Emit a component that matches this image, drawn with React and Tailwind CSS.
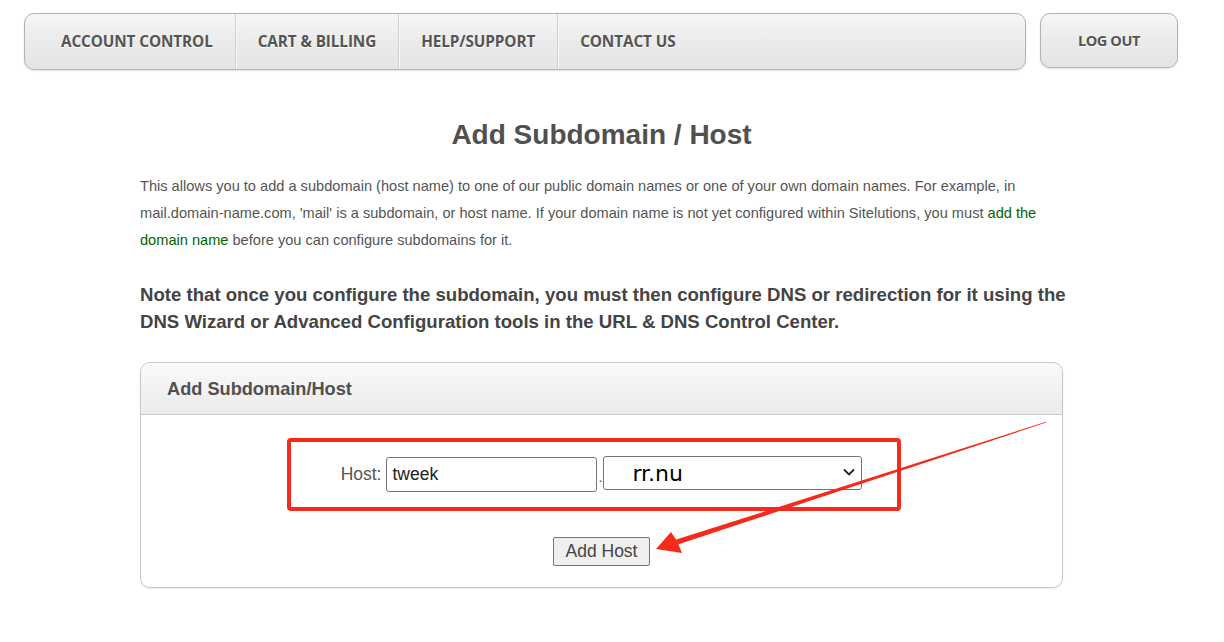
const navItems = ["ACCOUNT CONTROL", "CART & BILLING", "HELP/SUPPORT", "CONTACT US"]

const NavBar = () => (
  <div className="flex items-start gap-[14px]">
    <div className="flex h-[57px] w-[1002px] items-stretch rounded-[10px] border border-[#b3b3b3] bg-gradient-to-b from-[#f6f6f6] via-[#ebebeb] to-[#e4e4e4] pl-[14px] shadow-[0_1px_2px_rgba(0,0,0,0.12)]">
      {navItems.map((item, i) => (
        <div
          key={item}
          className={`flex items-center px-[22px] ${
            i < 3 ? "border-r border-[#d0d0d0] shadow-[1px_0_0_#f8f8f8]" : ""
          }`}
        >
          <span className="font-['Open_Sans'] text-[15.3px] font-bold tracking-[-0.1px] text-[#555] [text-shadow:0_1px_0_#fff]">
            {item}
          </span>
        </div>
      ))}
    </div>
    <div className="flex h-[55px] w-[138px] items-center justify-center rounded-[10px] border border-[#b3b3b3] bg-gradient-to-b from-[#f6f6f6] via-[#ebebeb] to-[#e4e4e4] shadow-[0_1px_2px_rgba(0,0,0,0.12)]">
      <span className="font-['Open_Sans'] text-[14.5px] font-bold tracking-[-0.4px] text-[#555] [text-shadow:0_1px_0_#fff]">
        LOG OUT
      </span>
    </div>
  </div>
)

const Arrow = () => (
  <svg
    className="pointer-events-none absolute left-0 top-0"
    width="1224"
    height="642"
    viewBox="0 0 1224 642"
  >
    <polygon
      points="1046,421.8 1046,422.6 677.8,544.6 676.2,539.6"
      fill="#f52a1a"
    />
    <polygon points="656,549 671,532 677,541 682,553" fill="#f52a1a" />
  </svg>
)

const App = () => {
  return (
    <div className="relative h-[642px] w-[1224px] overflow-hidden bg-white font-['Liberation_Sans'] text-[#555]">
      <div className="px-[24px] pt-[13px]">
        <NavBar />
      </div>

      <div className="ml-[140px] w-[923px]">
        <h1 className="mt-[49px] text-center text-[28px] font-bold leading-[32px] text-[#505050]">
          Add Subdomain / Host
        </h1>

        <p className="mt-[22px] text-[14.6px] leading-[27px] text-[#555]">
          This allows you to add a subdomain (host name) to one of our public domain names or one of your own
          domain names. For example, in mail.domain-name.com, 'mail' is a subdomain, or host name. If your
          domain name is not yet configured within Sitelutions, you must{" "}
          <a className="text-[#006600]">add the domain name</a> before you can configure subdomains for it.
        </p>

        <p className="mt-[27px] whitespace-nowrap text-[18.6px] font-bold leading-[27px] text-[#444]">
          Note that once you configure the subdomain, you must then configure DNS or redirection for it using the
          <br />
          DNS Wizard or Advanced Configuration tools in the URL &amp; DNS Control Center.
        </p>

        <div className="mt-[27px] rounded-[10px] border border-[#c8c8c8] shadow-[0_1px_2px_rgba(0,0,0,0.08)]">
          <div className="flex h-[52px] items-center rounded-t-[10px] border-b border-[#c8c8c8] bg-gradient-to-b from-[#fafafa] to-[#ebebeb] pl-[26px] pt-[2px]">
            <span className="text-[18.2px] font-bold text-[#505050]">Add Subdomain/Host</span>
          </div>

          <div className="relative flex flex-col items-center pb-[21px] pt-[42px]">
            <div className="flex items-center">
              <span className="mr-[5px] text-[17.5px] text-[#555]">Host:</span>
              <div className="flex h-[35px] w-[211px] items-center rounded-[3px] border border-[#767676] bg-white pl-[5px] text-[17.5px] text-[#222]">
                tweek
              </div>
              <span className="mx-[1px] mt-[6px] text-[14px] text-[#555]">.</span>
              <div className="relative -mt-[3px] flex h-[34px] w-[259px] items-center rounded-[3px] border border-[#767676] bg-white pl-[28px] font-['DejaVu_Sans'] text-[22px] text-black">
                rr.nu
                <svg
                  className="absolute right-[6px] top-[11px]"
                  width="12"
                  height="8"
                  viewBox="0 0 12 8"
                  fill="none"
                  stroke="#222"
                  strokeWidth="1.8"
                >
                  <path d="M1 1.5 L6 6.5 L11 1.5" />
                </svg>
              </div>
            </div>

            <button className="mt-[45px] h-[29px] w-[97px] rounded-[2px] border border-[#767676] bg-[#efefef] text-[17.5px] text-[#444]">
              Add Host
            </button>

            <div className="pointer-events-none absolute left-[146px] top-[23px] h-[73px] w-[614px] rounded-[4px] border-[4px] border-[#f52a1a]" />
          </div>
        </div>
      </div>

      <Arrow />
    </div>
  )
}

export default App
